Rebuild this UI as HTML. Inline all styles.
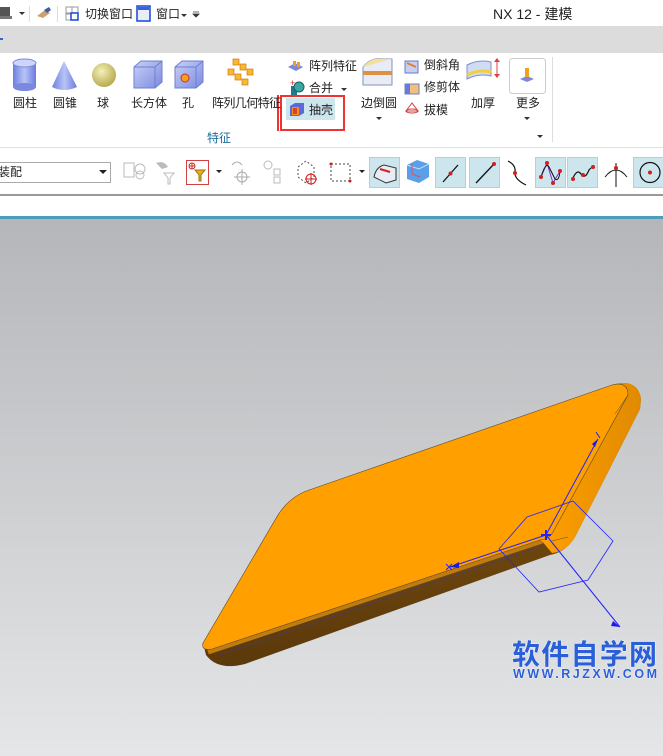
<!DOCTYPE html>
<html><head><meta charset="utf-8">
<style>
*{margin:0;padding:0;box-sizing:border-box}
body{width:663px;height:756px;overflow:hidden;background:#fff;position:relative;font-family:"Liberation Sans","Noto Sans CJK SC",sans-serif;font-size:12px;color:#222}
.a{position:absolute;white-space:nowrap}
.lbl{position:absolute;font-size:12px;line-height:14px;white-space:nowrap}
.hl{position:absolute;background:#cde6ee;border:1px solid #a9d3df}
</style></head><body>
<div class="a" style="left:0;top:0;width:663px;height:26px;background:#fff"></div>
<svg class="a" style="left:0;top:4px" width="210" height="20">
<rect x="-4" y="3" width="14" height="9" fill="#555"/><rect x="-2" y="12" width="14" height="3" fill="#777"/>
<path d="M19 8l3 3 3-3z" fill="#333"/>
<line x1="29.5" y1="2" x2="29.5" y2="18" stroke="#ddd"/>
<path d="M37 12l8-6 5 3-7 5z" fill="#c9a46a"/><path d="M44 6l5-3 2 3-4 3z" fill="#3b5bb5"/>
<line x1="57.5" y1="2" x2="57.5" y2="18" stroke="#ddd"/>
<rect x="66" y="3" width="6" height="6" fill="none" stroke="#999"/><rect x="66" y="10" width="6" height="6" fill="none" stroke="#999"/><rect x="72" y="3" width="6" height="6" fill="none" stroke="#999"/><rect x="71" y="9" width="7" height="7" fill="#fff" stroke="#1646d8" stroke-width="1.5"/>
<rect x="137" y="2" width="13" height="15" fill="#e8eef8" stroke="#1646d8" stroke-width="1.5"/><rect x="138" y="3" width="11" height="3" fill="#3a62d8"/>
<path d="M181 10l3 3 3-3z" fill="#333"/><path d="M193 10l3 3 3-3z M193 8h6" fill="#333" stroke="#333" stroke-width=".8"/>
</svg>
<div class="a" style="left:85px;top:5px;font-size:12px">切换窗口</div>
<div class="a" style="left:156px;top:5px;font-size:12px">窗口</div>
<div class="a" style="left:493px;top:4px;font-size:14px">NX 12 - 建模</div>
<div class="a" style="left:0;top:26px;width:663px;height:27px;background:#dcdcdc"></div>
<div class="a" style="left:0;top:38px;width:3px;height:2px;background:#2a6acb"></div>
<div class="a" style="left:0;top:147px;width:663px;height:1px;background:#e0e0e0"></div>
<svg class="a" style="left:0;top:53px" width="663" height="94">
<defs>
<linearGradient id="cy" x1="0" x2="1"><stop offset="0" stop-color="#6d7fe0"/><stop offset=".5" stop-color="#b8c4f6"/><stop offset="1" stop-color="#6a7bdc"/></linearGradient>
<radialGradient id="sp" cx=".4" cy=".35" r=".7"><stop offset="0" stop-color="#f4f0b8"/><stop offset="1" stop-color="#b5a54a"/></radialGradient>
<linearGradient id="bx" x1="0" y1="0" x2="1" y2="1"><stop offset="0" stop-color="#c9d1f7"/><stop offset="1" stop-color="#7a8ae0"/></linearGradient>
</defs>
<rect x="13" y="10" width="23" height="24" fill="url(#cy)"/><ellipse cx="24.5" cy="10" rx="11.5" ry="4" fill="#cdd5fa" stroke="#7a88d8"/><ellipse cx="24.5" cy="34" rx="11.5" ry="4" fill="#7a88e0"/>
<path d="M64 8L52 34Q64 40 77 34Z" fill="url(#cy)"/>
<circle cx="104" cy="22" r="12" fill="url(#sp)"/>
<path d="M134 14l7-6h21v21l-7 6h-21z" fill="url(#bx)" stroke="#6f7fcf"/><path d="M134 14h21v21M155 14l7-6" fill="none" stroke="#6f7fcf"/>
<path d="M175 14l7-6h21v21l-7 6h-21z" fill="url(#bx)" stroke="#6f7fcf"/><path d="M175 14h21v21M196 14l7-6" fill="none" stroke="#6f7fcf"/><circle cx="185" cy="25" r="4" fill="#f2a020" stroke="#d03020"/>
<g fill="#f8b830" stroke="#d07a10" stroke-width=".7">
<rect x="233" y="6" width="6" height="6"/><rect x="240" y="11" width="6" height="6"/><rect x="247" y="16" width="6" height="6"/>
<rect x="228" y="16" width="6" height="6"/><rect x="235" y="21" width="6" height="6"/><rect x="242" y="26" width="6" height="6"/></g>
<line x1="278" y1="42" x2="278" y2="78" stroke="#ee3333" stroke-width="2"/>
<path d="M288 14l7-4 8 4-7 4z" fill="#7a8ad8"/><rect x="293" y="8" width="3" height="5" fill="#f0a020"/><rect x="297" y="9" width="3" height="5" fill="#f0a020"/>
<text x="290" y="33" fill="#e02020" font-size="9">+</text><rect x="291" y="33" width="6" height="9" fill="#1f7a8a"/><circle cx="299" cy="34" r="5" fill="#3aa8a0" stroke="#1a5f6a"/>
<path d="M341 35l3 3 3-3z" fill="#333"/>
<path d="M363 14q8-10 20-8h9v26h-29z" fill="#e8ecf6" stroke="#8890b8"/><path d="M363 20h29" stroke="#e09040" stroke-width="4"/><path d="M363 14q8-10 20-8h9" fill="#f3e0a0"/>
<path d="M376 64l3 3 3-3z" fill="#333"/>
<path d="M405 8h13v12h-13z" fill="#c8d0f0" stroke="#6878c8"/><path d="M407 10l9 4" stroke="#e08030" stroke-width="2"/>
<rect x="405" y="31" width="14" height="10" fill="#f0c080" stroke="#7080c0"/><rect x="405" y="31" width="5" height="10" fill="#6a7ad8"/>
<path d="M412 50l-6 8h12z" fill="none" stroke="#d04040"/><ellipse cx="412" cy="58" rx="6" ry="2" fill="none" stroke="#d04040"/>
<path d="M467 12q12-6 24-3v14q-12-3-24 3z" fill="#d0dcf4" stroke="#8090c0"/><path d="M467 22q12-6 24-3" stroke="#f0d040" stroke-width="3" fill="none"/>
<path d="M497 6v18" stroke="#e04040"/><path d="M494 9l3-4 3 4M494 21l3 4 3-4" fill="#e04040"/>
<rect x="509.5" y="5.5" width="36" height="35" rx="3" fill="#fff" stroke="#ccc"/>
<path d="M520 26l7-3 7 3-7 3z" fill="#7a8ad8"/><rect x="525" y="15" width="4" height="9" fill="#f0a020"/>
<path d="M524 64l3 3 3-3z M537 82l3 3 3-3z" fill="#333"/>
<line x1="552.5" y1="4" x2="552.5" y2="89" stroke="#ddd"/>
</svg>
<div class="hl" style="left:286px;top:98px;width:49px;height:22px;border:none"></div>
<div class="a" style="left:280px;top:95px;width:65px;height:36px;border:2px solid #ee3333"></div>
<svg class="a" style="left:288px;top:102px" width="18" height="15"><path d="M2 4l5-3h9v10l-5 3H2z" fill="#5a6ad8"/><path d="M4 5h7v8H4z" fill="#f09020"/><path d="M5 6h4v6H5z" fill="#e04030"/></svg>
<div class="lbl" style="left:13px;top:96px">圆柱</div>
<div class="lbl" style="left:53px;top:96px">圆锥</div>
<div class="lbl" style="left:97px;top:96px">球</div>
<div class="lbl" style="left:131px;top:96px">长方体</div>
<div class="lbl" style="left:182px;top:96px">孔</div>
<div class="lbl" style="left:212px;top:96px;letter-spacing:-.6px">阵列几何特征</div>
<div class="lbl" style="left:309px;top:59px">阵列特征</div>
<div class="lbl" style="left:309px;top:81px">合并</div>
<div class="lbl" style="left:309px;top:103px">抽壳</div>
<div class="lbl" style="left:361px;top:96px">边倒圆</div>
<div class="lbl" style="left:424px;top:58px">倒斜角</div>
<div class="lbl" style="left:424px;top:80px">修剪体</div>
<div class="lbl" style="left:424px;top:103px">拔模</div>
<div class="lbl" style="left:471px;top:96px">加厚</div>
<div class="lbl" style="left:516px;top:96px">更多</div>
<div class="lbl" style="left:207px;top:131px;color:#1a6e9a">特征</div>
<div class="a" style="left:-2px;top:162px;width:113px;height:21px;border:1px solid #aaa;background:#fff"></div>
<div class="lbl" style="left:-2px;top:165px">装配</div>
<svg class="a" style="left:0;top:155px" width="663" height="36">
<path d="M99 15l4 4 4-4z" fill="#222"/>
<g stroke="#bbb" fill="none"><rect x="124" y="8" width="10" height="14"/><circle cx="140" cy="14" r="5"/><circle cx="140" cy="20" r="4"/></g>
<path d="M156 8q8-3 12 4l-6 2z" fill="#bbb"/><path d="M164 18h10l-4 5v6h-2v-6z" fill="none" stroke="#bbb"/>
<rect x="186.5" y="5.5" width="22" height="24" fill="#fff" stroke="#d04040"/><circle cx="192" cy="11" r="3" fill="none" stroke="#c03030"/><path d="M189 11h6M192 8v6" stroke="#c03030"/><path d="M195 15h10l-4 5v6h-2v-6z" fill="#e8b020" stroke="#a07010"/>
<path d="M216 15l3 3 3-3z" fill="#222"/>
<g stroke="#aaa" fill="none"><path d="M232 10q5-6 10 0"/><circle cx="242" cy="22" r="5"/><path d="M234 22h16M242 14v16"/></g>
<g stroke="#bbb" fill="none"><circle cx="268" cy="10" r="4"/><rect x="274" y="14" width="6" height="6"/><rect x="274" y="22" width="6" height="6"/></g>
<path d="M298 12l8-6 8 6v10l-8 6-8-6z" fill="none" stroke="#555" stroke-dasharray="2 2"/><circle cx="311" cy="24" r="5" fill="none" stroke="#d02020"/><path d="M305 24h12M311 18v12" stroke="#d02020"/>
<rect x="331" y="9" width="19" height="17" fill="none" stroke="#444" stroke-dasharray="2 2"/><circle cx="331" cy="9" r="1.5" fill="#d02020"/><circle cx="350" cy="26" r="1.5" fill="#d02020"/>
<path d="M359 15l3 3 3-3z" fill="#222"/>
<rect x="369.5" y="2.5" width="30" height="30" fill="#cde6ee" stroke="#a9d3df"/>
<path d="M374 22q2-10 10-12l12 3v12l-10 3z" fill="#e8ecf4" stroke="#333"/><path d="M380 14l10 3" stroke="#d02020" stroke-width="2"/>
<path d="M407 10l10-5 12 4v13l-10 6-12-4z" fill="#5aa0e8"/><path d="M407 10l12 4 10-5" fill="none" stroke="#c0dcf8"/><path d="M412 9v10l8 3" fill="none" stroke="#e05060"/>
<rect x="435.5" y="2.5" width="30" height="30" fill="#cde6ee" stroke="#a9d3df"/><path d="M443 27l15-17" stroke="#111" stroke-width="1.3"/><circle cx="450.5" cy="18.5" r="2" fill="#d02020"/>
<rect x="469.5" y="2.5" width="30" height="30" fill="#cde6ee" stroke="#a9d3df"/><path d="M476 28l18-19" stroke="#111" stroke-width="1.3"/><circle cx="494" cy="9" r="2" fill="#d02020"/>
<path d="M508 6q8 4 7 11t11 13" fill="none" stroke="#111" stroke-width="1.2"/><circle cx="515" cy="18" r="2" fill="#d02020"/>
<rect x="535.5" y="2.5" width="30" height="30" fill="#cde6ee" stroke="#a9d3df"/><path d="M541 22l6-14 6 20 7-12" fill="none" stroke="#8030c0"/><path d="M541 22q5-16 8-10t6 12q4 3 5-8" fill="none" stroke="#111"/><g fill="#d02020"><circle cx="541" cy="22" r="2"/><circle cx="547" cy="8" r="2"/><circle cx="553" cy="28" r="2"/><circle cx="560" cy="16" r="2"/></g>
<rect x="567.5" y="2.5" width="30" height="30" fill="#cde6ee" stroke="#a9d3df"/><path d="M572 25q5-12 9-6t8-4q3-4 5-2" fill="none" stroke="#111" stroke-width="1.2"/><g fill="#d02020"><circle cx="573" cy="24" r="2"/><circle cx="583" cy="20" r="2"/><circle cx="593" cy="12" r="2"/></g>
<path d="M605 22q11-14 22 0M616 8v24" fill="none" stroke="#111"/><circle cx="616" cy="13" r="2" fill="#d02020"/>
<rect x="633.5" y="2.5" width="31" height="30" fill="#cde6ee" stroke="#a9d3df"/><circle cx="650" cy="17.5" r="10" fill="none" stroke="#111" stroke-width="1.2"/><circle cx="650" cy="17.5" r="2" fill="#d02020"/>
</svg>
<div class="a" style="left:0;top:194px;width:663px;height:2px;background:#999"></div>
<div class="a" style="left:0;top:216px;width:663px;height:3px;background:#4e9bba"></div>
<div class="a" style="left:0;top:219px;width:663px;height:537px;background:linear-gradient(#b5b6b9,#e5e6e8)"></div>
<svg class="a" style="left:0;top:219px" width="663" height="537">
<defs>
<linearGradient id="sd" x1="0" y1="0" x2="0.15" y2="1"><stop offset="0" stop-color="#a86a10"/><stop offset=".45" stop-color="#7a4f10"/><stop offset="1" stop-color="#5a380a"/></linearGradient>
<linearGradient id="rt" x1="0" y1="0" x2="1" y2="0"><stop offset="0" stop-color="#ffa000"/><stop offset="1" stop-color="#e08a00"/></linearGradient>
</defs>
<path d="M203 424L275 301Q288 277 312 270L615 165Q638 160 641 180L640 190L575 318Q566 333 550 336L245 445Q218 452 206 436Z" fill="url(#sd)"/>
<path d="M208 433L542 322" stroke="#c07c10" stroke-width="5" fill="none"/>
<path d="M615 165Q638 160 641 180L640 190L575 318Q566 333 552 334L541 321Q550 318 553 313L628 176Q628 168 615 165Z" fill="url(#rt)"/>
<path d="M203 424L275 301Q288 277 312 270L612 166Q628 162 628 176L553 313Q549 320 540 321L212 430Q201 432 203 424Z" fill="#ff9f00" stroke="#5a4a30" stroke-width=".6"/>
<path d="M220 436L545 326" stroke="#3a3aa0" stroke-width=".5" fill="none"/>
<path d="M628 176L615 195M568 318L552 322" stroke="#5a4a30" stroke-width=".5" fill="none"/>
<g stroke="#2222ff" fill="none" stroke-width="1">
<path d="M546 316L598 220"/><path d="M546 316L450 348"/><path d="M546 316L620 408"/>
<path d="M527 298L573 282L613 322L588 361L539 373L499 330Z" stroke-width=".8"/>
<path d="M541 316h10M546 311v10" stroke-width="2"/>
<path d="M446 345l6 6M452 345l-6 6"/><path d="M596 213l4 6"/>
</g>
<g fill="#1a1aee"><path d="M598 220l-6 5 3 3z"/><path d="M450 348l9-5 0 6z"/><path d="M620 408l-7-6-2 5z"/></g>
<text x="512" y="445" font-size="28" font-weight="bold" fill="#2a5fd8" font-family="'Noto Sans CJK SC',sans-serif" stroke="#fff" stroke-width=".8" paint-order="stroke" textLength="145">软件自学网</text>
<text x="513" y="459" font-size="12.5" font-weight="bold" fill="#2a5fd8" font-family="'Liberation Sans',sans-serif" stroke="#fff" stroke-width=".6" paint-order="stroke" textLength="144">WWW.RJZXW.COM</text>
</svg>
</body></html>
